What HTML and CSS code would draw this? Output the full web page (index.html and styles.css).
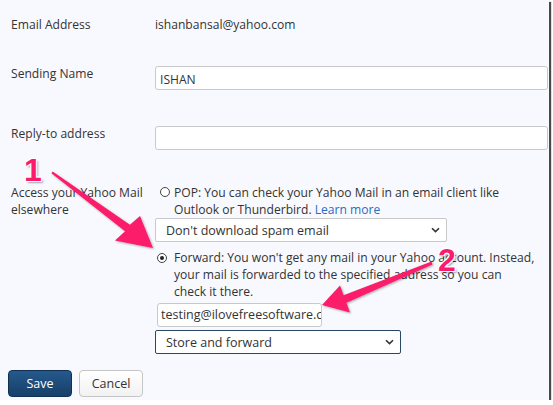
FILE: index.html
```html
<!DOCTYPE html>
<html>
<head>
<meta charset="utf-8">
<link rel="stylesheet" href="styles.css">
</head>
<body>
<div class="frame">
  <form class="form">
    <div class="row row-email">
      <div class="label">Email Address</div>
      <div class="field value">ishanbansal@yahoo.com</div>
    </div>
    <div class="row row-name">
      <div class="label">Sending Name</div>
      <div class="field"><div class="input">ISHAN</div></div>
    </div>
    <div class="row row-reply">
      <div class="label">Reply-to address</div>
      <div class="field"><div class="input"></div></div>
    </div>
    <div class="row row-access">
      <div class="label">Access your Yahoo Mail<br>elsewhere</div>
      <div class="field">
        <div class="option">
          <span class="radio-cell"><span class="radio radio-pop"></span></span>
          <span class="opt-text">POP: You can check your Yahoo Mail in an email client like<br>Outlook or Thunderbird. <a class="link">Learn more</a></span>
        </div>
        <div class="select select-pop">
          <span>Don't download spam email</span>
          <svg class="chev" width="9" height="6" viewBox="0 0 9 6"><path d="M1 1.2 L4.5 4.6 L8 1.2" fill="none" stroke="#333" stroke-width="1.6"/></svg>
        </div>
        <div class="option option-fwd">
          <span class="radio-cell"><span class="radio radio-fwd"><span class="dot"></span></span></span>
          <span class="opt-text">Forward: You won't get any mail in your Yahoo account. Instead,<br>your mail is forwarded to the specified address so you can<br>check it there.</span>
        </div>
        <div class="input input-fwd">testing@ilovefreesoftware.com</div>
        <div class="select select-fwd">
          <span>Store and forward</span>
          <svg class="chev" width="9" height="6" viewBox="0 0 9 6"><path d="M1 1.2 L4.5 4.6 L8 1.2" fill="none" stroke="#333" stroke-width="1.6"/></svg>
        </div>
      </div>
    </div>
    <div class="actions">
      <button type="button" class="btn btn-save">Save</button>
      <button type="button" class="btn btn-cancel">Cancel</button>
    </div>
  </form>

  <svg class="annot" width="549" height="400" viewBox="0 0 549 400">
    <defs>
      <filter id="sh" x="-10%" y="-10%" width="130%" height="130%">
        <feDropShadow dx="1" dy="1" stdDeviation="0.8" flood-color="#000" flood-opacity="0.35"/>
      </filter>
    </defs>
    <polygon filter="url(#sh)" fill="#fb1a6b" points="51.4,173.3 125.1,231.2 115,240.5 153,248 140,216 129.9,224.8 52.6,171.4"/>
    <polygon filter="url(#sh)" fill="#fb1a6b" points="431.5,261.4 343.6,295.3 340,285.5 322,305 350,312.5 346.4,302.7 432.5,264.6"/>
  </svg>
  <span class="num num1">1</span>
  <span class="num num2">2</span>
</div>
</body>
</html>
```

FILE: styles.css
```css
html, body {
  margin: 0;
  padding: 0;
  background: #ffffff;
}

.frame {
  position: relative;
  width: 549px;
  height: 400px;
  background: #f8f9fe;
  box-shadow: 2px 2px 1px #4a4a4a;
  font-family: "Open Sans", "Noto Sans", sans-serif;
  font-size: 12.1px;
  color: #333;
  overflow: visible;
}

.form {
  padding: 16px 1px 0 11px;
}

.row {
  display: grid;
  grid-template-columns: 144px 1fr;
  line-height: 17px;
}

.row-name { margin-top: 32px; }
.row-reply { margin-top: 35px; }
.row-access { margin-top: 34px; }

.input {
  height: 22px;
  box-sizing: content-box;
  border: 1px solid #c9c9c9;
  border-radius: 3px;
  background: #fff;
  padding: 0 4px;
  line-height: 22px;
  margin-top: 1px;
  white-space: nowrap;
  overflow: hidden;
}

.row-name .input,
.row-reply .input {
  padding-top: 1px;
  height: 21px;
  line-height: 23px;
}

.option {
  display: flex;
  white-space: nowrap;
}

.radio-cell {
  width: 19px;
  flex: none;
  position: relative;
}

.radio {
  position: absolute;
  box-sizing: border-box;
  border-radius: 50%;
  border: 1px solid #444;
  background: #fff;
}

.radio-pop {
  left: 5px;
  top: 3px;
  width: 10px;
  height: 10px;
}

.radio-fwd {
  left: 2px;
  top: 4px;
  width: 10px;
  height: 10px;
  display: flex;
  align-items: center;
  justify-content: center;
}

.dot {
  width: 4px;
  height: 4px;
  border-radius: 50%;
  background: #222;
}

.link {
  color: #1f6ec4;
}

.select {
  display: flex;
  align-items: center;
  justify-content: space-between;
  box-sizing: border-box;
  height: 24px;
  border: 1px solid #c9c9c9;
  border-radius: 2px;
  background: #fff;
  padding: 0 6px 0 10px;
  font-size: 12.5px;
}

.select-pop {
  width: 292px;
}

.option-fwd {
  margin-top: 7px;
}

.input-fwd {
  width: 157px;
  margin-left: 2px;
  margin-top: 3px;
  padding: 0 3px;
  font-size: 12.5px;
}

.select-fwd {
  width: 246px;
  margin-top: 3px;
  border-color: #2a4866;
  height: 24px;
}

.actions {
  display: flex;
  gap: 7px;
  margin: 16px 0 0 -3px;
}

.btn {
  width: 64px;
  height: 27px;
  border-radius: 4px;
  font-family: "Open Sans", "Noto Sans", sans-serif;
  font-size: 12.5px;
  padding: 0;
}

.btn-save {
  background: linear-gradient(#24598d, #183f68);
  border: 1px solid #12304f;
  color: #fff;
}

.btn-cancel {
  background: linear-gradient(#ffffff, #f2f2f2);
  border: 1px solid #c6c6c6;
  color: #333;
}

.annot {
  position: absolute;
  left: 0;
  top: 0;
  pointer-events: none;
}

.num {
  position: absolute;
  font-family: "Liberation Sans", Arial, sans-serif;
  font-weight: bold;
  font-size: 32px;
  line-height: 1;
  color: #fb1a6b;
  text-shadow: -1px -1px 0 #fff, 1px -1px 0 #fff, -1px 1px 0 #fff, 1px 1px 0 #fff, 2px 2px 2px rgba(0,0,0,0.35);
}

.num1 {
  left: 24px;
  top: 154px;
}

.num2 {
  left: 438px;
  top: 244px;
}
```
